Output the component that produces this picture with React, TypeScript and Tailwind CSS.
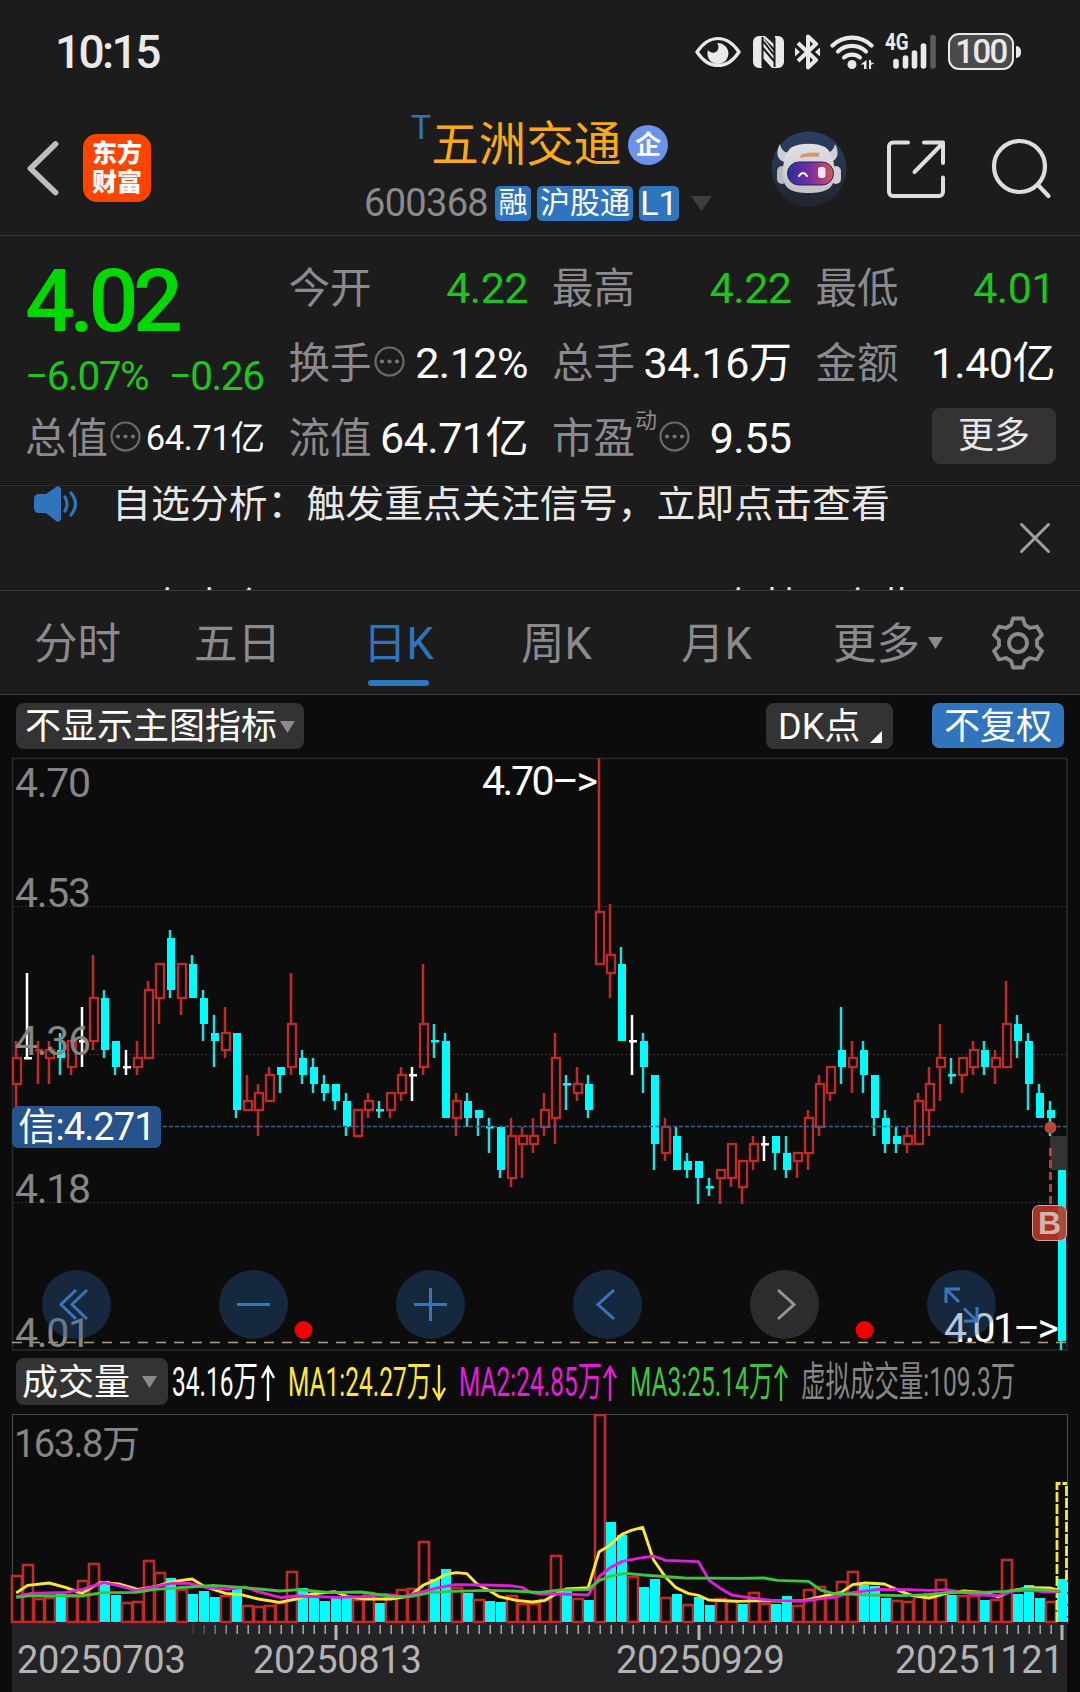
import React from 'react';
import clsx from 'clsx';

type Tone = 'r' | 'c' | 'w';
// tone, high, body top, body bottom, low - all in 0.01 steps below 4.70
type Candle = [Tone, number, number, number, number];

const CANDLES: Candle[] = [
  ['r', 33, 35, 38, 41], ['w', 25, 35, 35, 35], ['r', 33, 34, 34, 38], ['r', 33, 34, 35, 38],
  ['c', 32, 34, 35, 37], ['r', 33, 33, 36, 37], ['w', 29, 33, 33, 36], ['r', 23, 28, 33, 34],
  ['c', 27, 28, 34, 35], ['c', 33, 33, 36, 37], ['w', 34, 36, 36, 37], ['r', 33, 35, 36, 37],
  ['r', 26, 27, 35, 35], ['r', 24, 24, 28, 31], ['c', 20, 21, 27, 28], ['r', 24, 24, 28, 30],
  ['c', 23, 24, 28, 28], ['c', 27, 28, 31, 33], ['c', 30, 32, 33, 36], ['r', 29, 32, 34, 35],
  ['c', 32, 32, 41, 42], ['r', 37, 40, 41, 41], ['r', 38, 39, 41, 44], ['r', 36, 37, 40, 40],
  ['c', 36, 36, 37, 39], ['r', 25, 31, 36, 37], ['c', 34, 35, 37, 38], ['c', 35, 36, 38, 39],
  ['c', 37, 38, 39, 40], ['c', 38, 38, 40, 41], ['c', 39, 40, 43, 44], ['r', 41, 41, 44, 44],
  ['r', 39, 40, 41, 42], ['c', 40, 41, 41, 42], ['r', 39, 39, 41, 42], ['r', 36, 37, 39, 40],
  ['w', 36, 37, 37, 40], ['r', 24, 31, 36, 37], ['c', 31, 33, 33, 35], ['c', 32, 33, 42, 42],
  ['r', 39, 40, 42, 44], ['c', 39, 40, 42, 43], ['c', 41, 41, 42, 44], ['c', 42, 43, 43, 46],
  ['c', 43, 43, 48, 49], ['r', 42, 44, 49, 50], ['r', 43, 44, 45, 49], ['r', 42, 44, 45, 46],
  ['r', 39, 41, 43, 44], ['r', 32, 35, 42, 45], ['c', 37, 38, 38, 41], ['r', 36, 38, 39, 40],
  ['c', 37, 38, 41, 42], ['r', 0, 18, 24, 24], ['r', 17, 23, 25, 28], ['c', 22, 24, 33, 33],
  ['w', 30, 33, 33, 37], ['c', 32, 33, 36, 39], ['c', 37, 37, 45, 48], ['r', 42, 43, 46, 47],
  ['c', 43, 44, 48, 48], ['c', 46, 47, 48, 49], ['c', 47, 47, 49, 52], ['c', 49, 50, 50, 51],
  ['r', 48, 48, 49, 52], ['r', 45, 45, 49, 50], ['r', 47, 47, 50, 52], ['r', 44, 45, 47, 48],
  ['w', 44, 45, 45, 47], ['c', 44, 44, 46, 48], ['c', 44, 46, 48, 49], ['r', 46, 46, 47, 49],
  ['r', 41, 42, 46, 48], ['r', 37, 38, 43, 44], ['r', 36, 36, 39, 40], ['c', 29, 34, 36, 38],
  ['r', 33, 35, 36, 39], ['c', 33, 34, 37, 39], ['c', 37, 37, 42, 44], ['c', 41, 42, 45, 46],
  ['c', 43, 44, 45, 46], ['r', 43, 44, 45, 46], ['r', 39, 40, 45, 45], ['r', 36, 38, 41, 44],
  ['r', 31, 35, 36, 40], ['c', 35, 37, 37, 38], ['r', 35, 35, 37, 39], ['r', 33, 34, 36, 37],
  ['c', 33, 34, 36, 37], ['r', 34, 35, 36, 38], ['r', 26, 31, 36, 36], ['c', 30, 31, 33, 35],
  ['c', 32, 33, 38, 41], ['c', 38, 39, 42, 42], ['c', 40, 41, 42, 44], ['c', 48, 48, 68, 69],
];

// one letter per day, and the bar height in thirds of a pixel
const VOLUME_TONES =
  'rrrrcrrrccrrrrcrcccrcrrrrrcccccrrcrrrrccrcrccrrrrrcrcrccrccrcrccrrcrrccrrrrrrcccrrrrrcrrcrrcccrc'
    .split('');
const VOLUME_HEIGHTS = [
  141, 175, 71, 76, 85, 83, 125, 177, 123, 82, 60, 63, 187, 151, 132, 98, 84, 93, 74, 80, 108, 51, 47, 51,
  60, 152, 102, 80, 63, 76, 73, 68, 90, 57, 76, 98, 102, 243, 128, 159, 106, 86, 68, 64, 59, 80, 56, 56,
  68, 200, 95, 73, 65, 625, 301, 262, 138, 106, 128, 75, 84, 54, 74, 52, 73, 65, 55, 90, 58, 55, 78, 50,
  98, 108, 76, 123, 154, 112, 107, 71, 67, 64, 78, 86, 128, 82, 80, 80, 67, 68, 190, 85, 112, 71, 62, 128,
];

const MA_LINES = [
  {
    color: '#fbe73c',
    points:
      '47,579 80,556 143,549 190,562 238,580 290,548 345,552 400,568 450,560 500,545 558,537 595,560 655,580 700,584 750,597 812,607 860,597 905,582 972,575 1010,590 1060,597 1135,597 1190,588 1230,555 1260,542 1295,523 1325,518 1356,521 1385,552 1418,570 1450,590 1500,601 1545,606 1580,602 1613,583 1643,567 1708,563 1740,455 1768,438 1806,403 1833,391 1866,382 1898,480 1933,532 1963,563 1998,580 2028,586 2058,600 2143,604 2208,602 2268,603 2333,602 2368,594 2443,577 2476,554 2513,549 2568,552 2618,575 2648,586 2698,594 2748,580 2798,573 2858,577 2898,591 2938,572 2988,563 3048,564 3080,572',
  },
  {
    color: '#e01fd8',
    points:
      '47,590 90,580 190,577 240,568 300,548 345,557 395,572 450,560 500,550 550,550 600,563 660,568 710,561 750,575 815,593 860,588 980,592 1050,590 1120,583 1170,590 1230,574 1275,563 1320,554 1400,555 1480,557 1515,562 1540,577 1568,582 1628,582 1708,585 1740,530 1773,502 1808,484 1853,475 1898,468 1933,481 2028,485 2060,542 2093,566 2125,585 2173,593 2248,602 2333,603 2428,590 2478,577 2553,568 2638,569 2698,571 2748,569 2788,576 2848,585 2898,587 2938,574 2988,570 3038,576 3080,575',
  },
  {
    color: '#42c142',
    points:
      '47,592 90,587 235,588 300,578 395,577 450,568 550,561 620,556 700,562 812,573 870,569 960,578 1050,576 1140,590 1195,589 1250,578 1310,574 1420,571 1490,573 1568,577 1628,570 1708,569 1740,541 1778,527 1818,520 1868,525 1908,528 1988,534 2148,535 2218,534 2258,541 2348,544 2383,570 2418,580 2528,585 2618,587 2698,584 2768,576 2858,577 2918,574 2988,567 3080,573',
  },
];

const FILL: Record<Tone, string> = { r: '#c02a28', c: '#00fcfc', w: '#ffffff' };
const STEP = 8.58;

const StatusBar: React.FC = () => (
  <div className="flex h-[103px] items-center justify-between pl-[55px] pr-[59px] text-[#e9e9e9]">
    <span className="text-[46px] font-medium leading-none tracking-[-2.6px]">10:15</span>
    <div className="flex items-center">
      <svg width="46" height="34" viewBox="0 0 46 34" className="mr-3">
        <path d="M2 17C8 8 15 3.500 23 3.500S38 8 44 17C38 26 31 30.500 23 30.500S8 26 2 17Z" fill="none" stroke="currentColor" strokeWidth="3.200" />
        <path d="M22 8a10.500 10.500 0 1 1-9 7c2 3 6 3.500 8.500 1.500S24 10 22 8Z" fill="currentColor" />
      </svg>
      <svg width="31" height="34" viewBox="0 0 31 34" className="mr-[11px]">
        <path d="M6 1h3v32H6a6 6 0 0 1-6-6V7a6 6 0 0 1 6-6ZM22 1h3a6 6 0 0 1 6 6v20a6 6 0 0 1-6 6h-3Z" fill="currentColor" />
        <path d="M9 1l13 17v15h-3L9 22ZM9 1h3l10 9v4Z" fill="currentColor" />
        <path d="M9.500 2v30M21.500 3v29M10 6l11 14M10 13l11 13" stroke="#1c1c1c" strokeWidth="2" />
      </svg>
      <svg width="25" height="36" viewBox="0 0 25 36" className="mr-[10px]">
        <path d="M3 9l18 17-8 7.500V2.500L21 10 3 27" fill="none" stroke="currentColor" strokeWidth="4" strokeLinejoin="round" />
        <path d="M0 13.500l5 4.500-5 4.500ZM25 13.500L20 18l5 4.500Z" fill="currentColor" />
      </svg>
      <svg width="45" height="36" viewBox="0 0 45 36" className="mr-[11px]">
        <g fill="none" stroke="currentColor" strokeWidth="4.200" strokeLinecap="round">
          <path d="M2.500 11.500a28 28 0 0 1 39 0" />
          <path d="M8 17.500a20.500 20.500 0 0 1 28 0" />
          <path d="M14 23.500a12.500 12.500 0 0 1 16 0" />
        </g>
        <circle cx="22" cy="30.500" r="4.500" fill="currentColor" />
        <path d="M36.500 26v9h-2.500v-4.500h-3.500ZM39 26v9h2v-4l3.500-2-3.500-.5V26Z" fill="currentColor" />
      </svg>
      <div className="relative mr-3 h-9 w-[50px]">
        <span className="absolute -left-px -top-[3px] origin-left scale-x-[0.82] text-[23px] font-bold leading-6">4G</span>
        <svg width="50" height="36" viewBox="0 0 50 36" stroke="currentColor" strokeWidth="5.600" strokeLinecap="round">
          <path d="M10 27.500v4.500M19.500 24v8M28.500 19v13M37.500 12v20" />
          <path d="M47 3.500v28.500" stroke="#5c5c5c" />
        </svg>
      </div>
      <div className="flex h-[37px] w-[66px] items-center justify-center rounded-[11px] border-[2.5px] border-current bg-[#4a4a4a] text-[33px] font-medium leading-none tracking-[-1.600px]">
        100
      </div>
      <span className="ml-0.5 h-3 w-[5px] rounded-r-md bg-current" />
    </div>
  </div>
);

const Robot: React.FC = () => (
  <svg width="76" height="76" viewBox="0 0 76 76">
    <defs>
      <linearGradient id="halo" x2="0" y2="1">
        <stop offset="0" stopColor="#2c4064" />
        <stop offset="1" stopColor="#20242d" />
      </linearGradient>
      <linearGradient id="shell" x2="0" y2="1">
        <stop offset="0" stopColor="#e2e1e5" />
        <stop offset="1" stopColor="#c3c0c6" />
      </linearGradient>
      <linearGradient id="visor">
        <stop offset="0" stopColor="#2b2f9c" />
        <stop offset=".5" stopColor="#7a2fa0" />
        <stop offset="1" stopColor="#d8525c" />
      </linearGradient>
    </defs>
    <circle cx="38" cy="38" r="37.500" fill="url(#halo)" />
    <path d="M9 13c-4 7-4 15 4 18l6-9c-6 0-9-4-10-9ZM64 13c4 7 4 15-4 18l-6-9c6 0 9-4 10-9Z" fill="#cfcfd6" />
    <rect x="6" y="35" width="10" height="18" rx="5" fill="#b9b9c0" />
    <rect x="60" y="35" width="10" height="18" rx="5" fill="#cfcfd4" />
    <path d="M21 16c8-4.500 25-4.500 33 0 7 5 10 15 9.500 30-1 11-8 16-26 16S13 57 12 46c-.5-15 2-25 9-30Z" fill="url(#shell)" />
    <path d="M30 23.500q9-3 19-1.500l-2 4q-9-1-18 1Z" fill="#cf9a70" />
    <rect x="16.500" y="31" width="46" height="23" rx="11.500" fill="url(#visor)" stroke="#27235a" strokeWidth="1" />
    <path d="M28 45q4-6 8 0" fill="none" stroke="#fff" strokeWidth="2" strokeLinecap="round" />
    <rect x="47" y="36" width="7.500" height="11" rx="3" fill="#f3e6f0" />
  </svg>
);

const Tag: React.FC<{ className?: string; children: React.ReactNode }> = ({ className, children }) => (
  <span className={clsx('flex h-[35px] items-center justify-center rounded-[5px] bg-[#3174be] leading-none text-white', className)}>
    {children}
  </span>
);

const Header: React.FC = () => (
  <header className="flex h-[133px] border-b border-[#393939]">
    <div className="flex w-[364px] items-start pl-[26px] pt-[31px]">
      <svg width="36" height="70" viewBox="0 0 36 70" className="mr-[21px]">
        <path d="M29.500 10L4.500 34.500l25 24" fill="none" stroke="#bebebe" strokeWidth="5.800" strokeLinecap="round" strokeLinejoin="round" />
      </svg>
      <div className="flex h-[68px] w-[68px] flex-col items-center justify-center rounded-[14px] bg-[#ff4400] text-[25px] font-black leading-[29px] text-white">
        <span>东方</span>
        <span>财富</span>
      </div>
    </div>
    <div className="flex flex-col">
      <div className="flex h-[76px] items-start pl-[47px]">
        <span className="mt-[6px] text-[34px] leading-[36px] text-[#3174be]">T</span>
        <span className="mt-[9px] text-[47.5px] leading-[66px] text-[#fba919]">五洲交通</span>
        <span className="ml-[7px] mt-[22px] flex h-10 w-10 items-center justify-center rounded-full bg-[#6d92ea] text-[26px] font-bold leading-none text-white">
          企
        </span>
      </div>
      <div className="flex items-center pt-[6px]">
        <span className="w-[131px] pt-px text-[38px] leading-[35px] tracking-[-0.700px] text-[#8b8a8f]">600368</span>
        <Tag className="mr-1.5 w-9 text-[29px]">融</Tag>
        <Tag className="mr-1.5 w-24 text-[30px]">沪股通</Tag>
        <Tag className="mr-3 w-10 text-[34px]">L1</Tag>
        <svg width="21" height="15" viewBox="0 0 21 15">
          <path d="M0 0h21L10.500 15Z" fill="#3d3d3d" />
        </svg>
      </div>
    </div>
    <div className="ml-[59px] flex items-start pt-7">
      <Robot />
      <svg width="60" height="60" viewBox="0 0 60 60" fill="none" stroke="#dedede" strokeWidth="4" strokeLinecap="round" strokeLinejoin="round" className="ml-[39px] mt-2">
        <path d="M22 3.500H7a4 4 0 0 0-4 4V53a4 4 0 0 0 4 4h46a4 4 0 0 0 4-4V38.500M38 3.500h19V24M55 6L28.500 33" />
      </svg>
      <svg width="62" height="64" viewBox="0 0 62 64" fill="none" stroke="#dedede" strokeWidth="4.200" strokeLinecap="round" className="ml-[44px] mt-1.5">
        <circle cx="29.500" cy="29.500" r="25.500" />
        <path d="M48 48l10.500 11" />
      </svg>
    </div>
  </header>
);

const Info: React.FC = () => (
  <svg width="31" height="31" viewBox="0 0 31 31" className="mx-0.5 -mt-1 shrink-0">
    <circle cx="15.500" cy="15.500" r="14" fill="none" stroke="#6a6a6c" strokeWidth="2.200" />
    <path d="M8 15.500h.01M15.500 15.500h.01M23 15.500h.01" stroke="#77777a" strokeWidth="4.200" strokeLinecap="round" />
  </svg>
);

interface StatProps {
  label: string;
  value: string;
  green?: boolean;
  info?: boolean;
  sup?: string;
  small?: boolean;
}

const Stat: React.FC<StatProps> = ({ label, value, green, info, sup, small }) => (
  <div className="flex h-[75px] items-center">
    <span className="shrink-0 text-[41.5px] text-[#8b8a8f]">{label}</span>
    {sup && <span className="mb-9 text-[22px] leading-none text-[#8b8a8f]">{sup}</span>}
    {info && <Info />}
    <span
      className={clsx(
        'ml-auto whitespace-nowrap',
        small ? 'text-[34.5px] tracking-[-0.400px]' : 'text-[43px] tracking-[-0.500px]',
        green ? 'text-[#1fc51f]' : 'text-white',
      )}
    >
      {value}
    </span>
  </div>
);

const Quote: React.FC = () => (
  <section className="grid h-[250px] grid-cols-4 gap-x-6 border-b border-[#2a2a2a] px-[25px] pt-[14px] leading-none">
    <div>
      <div className="flex h-[101px] items-center text-[88px] font-medium tracking-[-5.500px] text-[#00d900]">4.02</div>
      <div className="flex h-[50px] items-center justify-between pr-px text-[40.5px] tracking-[-1.400px] text-[#1fc51f]">
        <span>−6.07%</span>
        <span>−0.26</span>
      </div>
      <Stat label="总值" value="64.71亿" info small />
    </div>
    <div className="pt-px">
      <Stat label="今开" value="4.22" green />
      <Stat label="换手" value="2.12%" info />
      <Stat label="流值" value="64.71亿" />
    </div>
    <div className="pt-px">
      <Stat label="最高" value="4.22" green />
      <Stat label="总手" value="34.16万" />
      <Stat label="市盈" value="9.55" sup="动" info />
    </div>
    <div className="pt-px">
      <Stat label="最低" value="4.01" green />
      <Stat label="金额" value="1.40亿" />
      <div className="-mr-px ml-auto mt-[7px] flex h-[56px] w-[124px] items-center justify-center rounded-lg bg-[#333333] text-[36px] text-[#e8e8e8]">更多</div>
    </div>
  </section>
);

const Ticker: React.FC = () => (
  <section className="flex h-[105px] border-b border-[#393939]">
    <svg width="46" height="36" viewBox="0 0 46 36" className="ml-[33px] shrink-0">
      <path d="M6 8h7L23 1q4-2 5 2v30q-1 4-5 2l-10-8H6q-5 0-5-5v-9q0-5 5-5Z" fill="#3174be" />
      <path d="M32 11q4 7 0 14M38 7q9 11 0 22" fill="none" stroke="#3174be" strokeWidth="3.200" strokeLinecap="round" />
    </svg>
    <div className="ml-[33px] h-[104px] w-[852px] overflow-hidden whitespace-nowrap text-[38.900px] text-[#e8e8e8]">
      <div className="-mt-[13px] h-[112px] leading-[62px]">自选分析：触发重点关注信号，立即点击查看</div>
      <div className="flex leading-[44px]">
        <span className="w-[610px]">　有大个</span>
        <span>有基一次此</span>
      </div>
    </div>
    <svg width="32" height="32" viewBox="0 0 32 32" className="ml-[55px] mt-[36px] shrink-0">
      <path d="M2.500 2.500l27 27M29.500 2.500l-27 27" stroke="#a0a0a0" strokeWidth="3" strokeLinecap="round" />
    </svg>
  </section>
);

const Down: React.FC<{ className?: string }> = ({ className }) => (
  <svg width="15" height="12" viewBox="0 0 15 12" className={className}>
    <path d="M0 0h15L7.500 12Z" fill="#8b8a8f" />
  </svg>
);

const Tabs: React.FC = () => (
  <nav className="flex h-[104px] items-center border-b border-[#393939] pl-[34px] text-[43.5px] leading-none text-[#8b8a8f]">
    <span className="w-[160px] pt-[5px]">分时</span>
    <span className="w-[169px] pt-[5px]">五日</span>
    <span className="relative flex h-full w-[158px] items-center pt-[5px] text-[#3174be]">
      日K
      <i className="absolute bottom-[8px] left-[5px] h-1.5 w-[61px] rounded-full bg-[#3174be]" />
    </span>
    <span className="w-[160px] pt-[5px]">周K</span>
    <span className="w-[152px] pt-[5px]">月K</span>
    <span className="pt-[5px]">更多</span>
    <Down className="ml-2" />
    <svg width="54" height="54" viewBox="0 0 54 54" fill="none" stroke="#8b8a8f" strokeWidth="3.800" strokeLinejoin="round" className="ml-[48px]">
      <path d="M22 2.500h10l2 6.500 5 3 7-1.500 5 8.500-5 5v6l5 5-5 8.500-7-1.500-5 3-2 6.500H22l-2-6.500-5-3-7 1.500-5-8.500 5-5v-6l-5-5 5-8.500 7 1.500 5-3Z" />
      <circle cx="27" cy="27" r="9" />
    </svg>
  </nav>
);

const Toolbar: React.FC = () => (
  <div className="flex h-[62px] items-start pl-4 pt-2 text-[36px] leading-none text-white">
    <div className="flex h-[46px] w-[288px] items-center rounded-lg bg-[#333333] pl-[9px] pt-0.5">
      不显示主图指标
      <Down className="ml-[3px]" />
    </div>
    <div className="ml-[462px] flex h-[46px] w-[127px] items-center rounded-lg bg-[#333333] pl-3 pt-0.5">
      <span>DK点</span>
      <svg width="12" height="12" viewBox="0 0 12 12" className="ml-2.5 mt-[20px]">
        <path d="M12 0v12H0Z" fill="#fff" />
      </svg>
    </div>
    <div className="ml-[39px] flex h-[45px] w-[132px] items-center justify-center rounded-[7px] bg-[#3174be] pt-0.5">不复权</div>
  </div>
);

const PriceChart: React.FC = () => (
  <div className="relative h-[594px]">
    <svg width="1080" height="594" viewBox="0 757 1080 594" className="block" fontSize="41" fill="#868686">
      <path d="M12.500 1350V758.500H1067V1350Z" fill="none" stroke="#2b2b2b" strokeWidth="1.500" />
      <path d="M13 906.500H1067M13 1054.500H1067M13 1202.500H1067" stroke="#343434" strokeDasharray="2 2" />
      {CANDLES.map(([tone, high, top, bottom, low], i) => {
        const x = 16 + i * 11;
        const y = (n: number) => Math.round(758 + n * STEP);
        const flat = top === bottom;
        const wick = tone === 'c' ? '#28dada' : FILL[tone];
        return (
          <g key={i}>
            {tone === 'r' && !flat ? (
              <path d={`M${x} ${y(high)}V${y(top)}M${x} ${y(bottom)}V${y(low)}`} stroke={wick} strokeWidth="2.500" />
            ) : (
              <path d={`M${x} ${y(high)}V${y(low)}`} stroke={wick} strokeWidth="2.500" />
            )}
            {flat && <rect x={x - 3} y={y(top) - 1} width="8" height="2.500" fill={FILL[tone]} />}
            {!flat && tone === 'r' && (
              <rect x={x - 3} y={y(top)} width="8" height={y(bottom) - y(top)} fill="none" stroke={FILL.r} strokeWidth="2.300" />
            )}
            {!flat && tone === 'c' && <rect x={x - 3} y={y(top)} width="8" height={y(bottom) - y(top)} fill={FILL.c} />}
          </g>
        );
      })}
      <path d="M13 1126.500H1067" stroke="#35649b" strokeWidth="1.300" strokeDasharray="4 2" />
      <path d="M12 1342.500H1067" stroke="#b89a78" strokeWidth="1.300" strokeDasharray="10 8" />
      <rect x="1050" y="1136" width="17" height="34" fill="#333" />
      <circle cx="1050.500" cy="1127.500" r="6" fill="#b5463c" />
      <path d="M1050.500 1148v57" stroke="#b5402f" strokeWidth="3" strokeDasharray="8 4" />
      <text x="15" y="797" textLength="76">4.70</text>
      <text x="15" y="907" textLength="76">4.53</text>
      <text x="15" y="1055" textLength="76">4.36</text>
      <text x="15" y="1203" textLength="76">4.18</text>
      <text x="15" y="1347" textLength="76">4.01</text>
      <text x="482" y="795" textLength="116" fill="#fff">4.70–&gt;</text>
      <text x="944" y="1342" textLength="115" fill="#fff">4.01–&gt;</text>
      <circle cx="303.500" cy="1330" r="9" fill="#f20000" />
      <circle cx="864.500" cy="1330" r="9" fill="#f20000" />
    </svg>
    <div className="absolute left-3 top-[349px] flex h-[42px] w-[149px] items-center justify-center rounded-md bg-[#26538b] text-[38px] leading-none tracking-[-0.900px] text-white">
      信:4.271
    </div>
    <div className="absolute left-[1032px] top-[448px] flex h-9 w-[35px] items-center justify-center rounded-[7px] border-[1.5px] border-[#c9a9a3] bg-[#b93725]/90 font-['Liberation_Sans',sans-serif] text-[32px] font-bold leading-none text-[#cfb5b1]">
      B
    </div>
    <div className="absolute left-[42px] top-[513px] flex gap-[108px]">
      <Round d="M34 20L19 34.500 34 49M45 20L30 34.500 45 49" />
      <Round d="M18 34.500h33" />
      <Round d="M18 34.500h33M34.500 18v33" />
      <Round d="M41 20L25 34.500 41 49" />
      <Round d="M28 20L44 34.500 28 49" grey />
      <Round d="M33 19H19v14M19.500 19.500L32 32M37 51h13V37M49.500 50.500L37 38.500" />
    </div>
  </div>
);

const Round: React.FC<{ d: string; grey?: boolean }> = ({ d, grey }) => (
  <svg width="69" height="69" viewBox="0 0 69 69" className={grey ? 'text-[#959595]' : 'text-[#3a75bb]'}>
    <circle cx="34.500" cy="34.500" r="34.500" fill={grey ? '#2c2c2c' : '#2a5f9e'} fillOpacity={grey ? 1 : 0.35} />
    <path d={d} fill="none" stroke="currentColor" strokeWidth="3" />
  </svg>
);

interface MetricProps {
  text: string;
  arrow?: 'up' | 'down';
  className: string;
}

const Metric: React.FC<MetricProps> = ({ text, arrow, className }) => (
  <div className={clsx('flex items-center', className)}>
    <span className="w-0 flex-1 whitespace-nowrap">
      <span className="inline-block origin-left scale-x-[0.604]">{text}</span>
    </span>
    {arrow && (
      <svg width="14" height="36" viewBox="0 0 14 36" fill="none" stroke="currentColor" strokeWidth="2.400" className={clsx('shrink-0', arrow === 'down' && 'rotate-180')}>
        <path d="M7 36V2M1 13L7 2l6 11" />
      </svg>
    )}
  </div>
);

const VolumeHeader: React.FC = () => (
  <div className="flex h-[63px] items-start pl-4 pt-[7px] leading-none">
    <div className="flex h-[47px] w-[152px] items-center rounded-lg bg-[#333333] pl-1.5 text-[36px] text-white">
      <span className="pt-0.5">成交量</span>
      <Down className="ml-3" />
    </div>
    <div className="ml-1 flex h-[47px] items-center gap-[13px] pt-0.5 text-[40.5px]">
      <Metric text="34.16万" arrow="up" className="w-[103px] text-white" />
      <Metric text="MA1:24.27万" arrow="down" className="w-[158px] text-[#fbe73c]" />
      <Metric text="MA2:24.85万" arrow="up" className="w-[158px] text-[#e01fd8]" />
      <Metric text="MA3:25.14万" arrow="up" className="w-[158px] text-[#42c142]" />
      <Metric text="虚拟成交量:109.3万" className="w-[210px] text-[#868686]" />
    </div>
  </div>
);

const VolumeChart: React.FC = () => (
  <svg width="1080" height="210" viewBox="0 1414 1080 210" className="block">
    <path d="M12.500 1624V1414.500H1067.500V1624" fill="none" stroke="#4a4a4a" />
    {VOLUME_HEIGHTS.map((h, i) => {
      const x = 12 + i * 11;
      const height = Math.round(h / 3);
      return VOLUME_TONES[i] === 'c' ? (
        <rect key={i} x={x} y={1622 - height} width="10" height={height} fill={FILL.c} />
      ) : (
        <rect key={i} x={x} y={1623 - height} width="10" height={height - 1} fill="none" stroke={FILL.r} strokeWidth="2.600" />
      );
    })}
    <path d="M1057 1622V1483.500H1067M1066.500 1486v136" fill="none" stroke="#fbe73c" strokeWidth="2.800" strokeDasharray="10 2" />
    <rect x="1058" y="1580" width="9" height="42" fill={FILL.c} />
    <path d="M12 1623.500H1067" stroke="#5c1414" />
    <g transform="translate(0 1400) scale(.34437 .33333)" fill="none">
      {MA_LINES.map((line) => (
        <polyline key={line.color} points={line.points} stroke={line.color} strokeWidth="2.900" strokeLinejoin="round" vectorEffect="non-scaling-stroke" />
      ))}
    </g>
    <text x="14" y="1457" fontSize="38" fill="#868686" textLength="126">
      163.8万
    </text>
  </svg>
);

const Axis: React.FC = () => (
  <div className="ml-3 h-[68px] w-[1055px] bg-[#242426] text-[38px] leading-none tracking-[-0.300px] text-[#b4b4b4]">
    <svg width="1055" height="17" viewBox="12 1624 1055 17" className="block">
      {Array.from({ length: 80 }, (_, i) => {
        const major = i === 13 || i === 46 || i === 79;
        return (
          <rect
            key={i}
            x={192.5 + i * 11 - (major ? 1 : 0)}
            y="1625"
            width={major ? 3 : 1.4}
            height={major ? 15 : 9}
            fill="#b4b4b4"
            opacity={Math.min(1, 0.2 + i * 0.2)}
          />
        );
      })}
    </svg>
    <div className="flex pl-[5px]">
      <span className="w-[236px]">20250703</span>
      <span className="w-[363px]">20250813</span>
      <span className="w-[279px]">20250929</span>
      <span>20251121</span>
    </div>
  </div>
);

export default function App() {
  return (
    <div className="flex h-[1692px] w-[1080px] flex-col overflow-hidden bg-[#1c1c1c] font-[Roboto,'Noto_Sans_CJK_SC',sans-serif]">
      <StatusBar />
      <Header />
      <Quote />
      <Ticker />
      <Tabs />
      <main className="flex-1 bg-[#0c0c0c]">
        <Toolbar />
        <PriceChart />
        <VolumeHeader />
        <VolumeChart />
        <Axis />
      </main>
    </div>
  );
}
